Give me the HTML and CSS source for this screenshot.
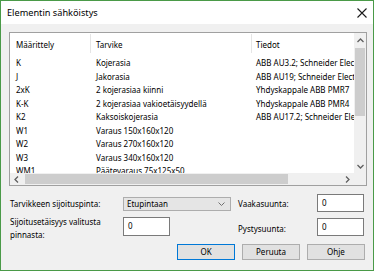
FILE: index.html
```html
<!DOCTYPE html>
<html>
<head>
<meta charset="utf-8">
<link rel="stylesheet" href="styles.css">
</head>
<body>
<div class="window">
  <div class="titlebar">
    <span class="title">Elementin sähköistys</span>
    <svg class="close" width="10" height="10" viewBox="0 0 10 10"><path d="M0.5 0.5L9.5 9.5M9.5 0.5L0.5 9.5" stroke="#1a1a1a" stroke-width="1.1" fill="none"/></svg>
  </div>
  <div class="content">
    <div class="listbox">
      <div class="listview">
        <div class="row head">
          <div class="c1">Määrittely</div><div class="c2">Tarvike</div><div class="c3">Tiedot</div>
        </div>
        <div class="rows">
          <div class="row"><div class="c1">K</div><div class="c2">Kojerasia</div><div class="c3">ABB AU3.2; Schneider Electric</div></div>
          <div class="row"><div class="c1">J</div><div class="c2">Jakorasia</div><div class="c3">ABB AU19; Schneider Electric</div></div>
          <div class="row"><div class="c1">2xK</div><div class="c2">2 kojerasiaa kiinni</div><div class="c3">Yhdyskappale ABB PMR7</div></div>
          <div class="row"><div class="c1">K-K</div><div class="c2">2 kojerasiaa vakioetäisyydellä</div><div class="c3">Yhdyskappale ABB PMR4</div></div>
          <div class="row"><div class="c1">K2</div><div class="c2">Kaksoiskojerasia</div><div class="c3">ABB AU17.2; Schneider Electric</div></div>
          <div class="row"><div class="c1">W1</div><div class="c2">Varaus 150x160x120</div><div class="c3"></div></div>
          <div class="row"><div class="c1">W2</div><div class="c2">Varaus 270x160x120</div><div class="c3"></div></div>
          <div class="row"><div class="c1">W3</div><div class="c2">Varaus 340x160x120</div><div class="c3"></div></div>
          <div class="row"><div class="c1">WM1</div><div class="c2">Päätevaraus 75x125x50</div><div class="c3"></div></div>
        </div>
      </div>
      <div class="vscroll">
        <div class="sbtn"><svg width="7" height="5" viewBox="0 0 7 5"><path d="M0.5 4L3.5 1L6.5 4" stroke="#606060" stroke-width="1.3" fill="none"/></svg></div>
        <div class="vtrack"><div class="vthumb"></div></div>
        <div class="sbtn"><svg width="7" height="5" viewBox="0 0 7 5"><path d="M0.5 1L3.5 4L6.5 1" stroke="#606060" stroke-width="1.3" fill="none"/></svg></div>
      </div>
      <div class="hscroll">
        <div class="hbtn"><svg width="5" height="7" viewBox="0 0 5 7"><path d="M4 0.5L1 3.5L4 6.5" stroke="#606060" stroke-width="1.3" fill="none"/></svg></div>
        <div class="htrack"><div class="hthumb"></div></div>
        <div class="hbtn"><svg width="5" height="7" viewBox="0 0 5 7"><path d="M1 0.5L4 3.5L1 6.5" stroke="#606060" stroke-width="1.3" fill="none"/></svg></div>
      </div>
      <div class="corner"></div>
    </div>

    <div class="form">
      <div class="lbl l1">Tarvikkeen sijoituspinta:</div>
      <div class="combo"><span>Etupintaan</span><svg width="7" height="4" viewBox="0 0 7 4"><path d="M0.5 0.5L3.5 3.5L6.5 0.5" stroke="#707070" stroke-width="1" fill="none"/></svg></div>
      <div class="lbl l3">Vaakasuunta:</div>
      <div class="input i1">0</div>

      <div class="lbl l2">Sijoitusetäisyys valitusta pinnasta:</div>
      <div class="input i2">0</div>
      <div class="lbl l4">Pystysuunta:</div>
      <div class="input i3">0</div>
    </div>

    <div class="buttons">
      <div class="btn default">OK</div>
      <div class="btn">Peruuta</div>
      <div class="btn">Ohje</div>
    </div>
  </div>
</div>
</body>
</html>
```
FILE: styles.css
```css
* { box-sizing: border-box; }
html, body { margin: 0; padding: 0; background: #f0f0f0; }
body { font-family: "Noto Sans", "Open Sans", sans-serif; font-size: 8px; color: #000; }

.window {
  width: 374px;
  height: 271px;
  border: 1px solid #4a9a48;
  background: #f0f0f0;
  display: flex;
  flex-direction: column;
  overflow: hidden;
}

.titlebar {
  height: 23px;
  background: #fff;
  display: flex;
  align-items: center;
  justify-content: space-between;
  padding: 0 6px 0 6px;
  flex: none;
}
.title { font-size: 9.2px; color: #000; }
.close { margin-top: 1px; }

.content { padding: 8px 8px 0 8px; }

.listbox {
  width: 358px;
  height: 154px;
  border: 1px solid #a0a0a0;
  background: #fff;
  display: grid;
  grid-template-columns: 1fr 12px;
  grid-template-rows: 1fr 12px;
}

.listview { overflow: hidden; }
.row { display: flex; height: 13.5px; line-height: 13.5px; white-space: nowrap; }
.row.head { height: 22px; line-height: 20px; margin-bottom: 1px; }
.c1 { width: 80px; padding-left: 6px; flex: none; overflow: hidden; }
.c2 { width: 161px; padding-left: 6px; flex: none; overflow: hidden; }
.c3 { width: 200px; padding-left: 5px; flex: none; overflow: hidden; }
.head .c2, .head .c3 { border-left: 1px solid #e5e5e5; padding-left: 5px; }
.head .c3 { padding-left: 4px; }
.head > div { height: 19px; margin-top: 1px; line-height: 21px; }

.vscroll {
  background: #f0f0f0;
  display: flex;
  flex-direction: column;
}
.sbtn { height: 14px; display: flex; align-items: center; justify-content: center; flex: none; }
.vtrack { flex: 1; padding-top: 1px; }
.vthumb { height: 68px; background: #cdcdcd; margin: 0 1px; }

.hscroll {
  background: #f0f0f0;
  display: flex;
}
.hbtn { width: 13px; display: flex; align-items: center; justify-content: center; flex: none; }
.htrack { flex: 1; padding-left: 2px; padding-top: 1px; padding-bottom: 1px; }
.hthumb { width: 263px; height: 100%; background: #cdcdcd; }
.corner { background: #f0f0f0; }

.form {
  display: grid;
  grid-template-columns: 113px 108px 7px 79px 47px;
  grid-template-rows: 18px 18px;
  row-gap: 6px;
  margin-top: 8px;
  margin-left: 1px;
}
.lbl { line-height: 13px; }
.l1 { grid-column: 1; grid-row: 1; align-self: center; padding-top: 1px; }
.combo {
  grid-column: 2; grid-row: 1;
  align-self: center;
  height: 14px;
  margin-top: 1px;
  border: 1px solid #adadad;
  background: #e5e5e5;
  display: flex;
  align-items: center;
  justify-content: space-between;
  padding: 0 5px 0 3px;
}
.l3 { grid-column: 4; grid-row: 1; align-self: center; }
.input {
  border: 1px solid #7a7a7a;
  background: #fff;
  padding-left: 4px;
  line-height: 15px;
}
.i1 { grid-column: 5; grid-row: 1; height: 18px; }
.l2 { grid-column: 1; grid-row: 2; margin-top: -3px; }
.i2 { grid-column: 2; grid-row: 2; width: 47px; height: 19px; margin-top: -1px; }
.l4 { grid-column: 4; grid-row: 2; align-self: center; padding-top: 2px; }
.i3 { grid-column: 5; grid-row: 2; height: 18px; }

.buttons {
  display: flex;
  justify-content: flex-end;
  gap: 7px;
  margin-top: 8px;
  padding-right: 0;
}
.btn {
  width: 58px;
  height: 16px;
  border: 1px solid #adadad;
  background: #e1e1e1;
  text-align: center;
  line-height: 14px;
}
.btn.default { border-color: #0078d7; }
```
